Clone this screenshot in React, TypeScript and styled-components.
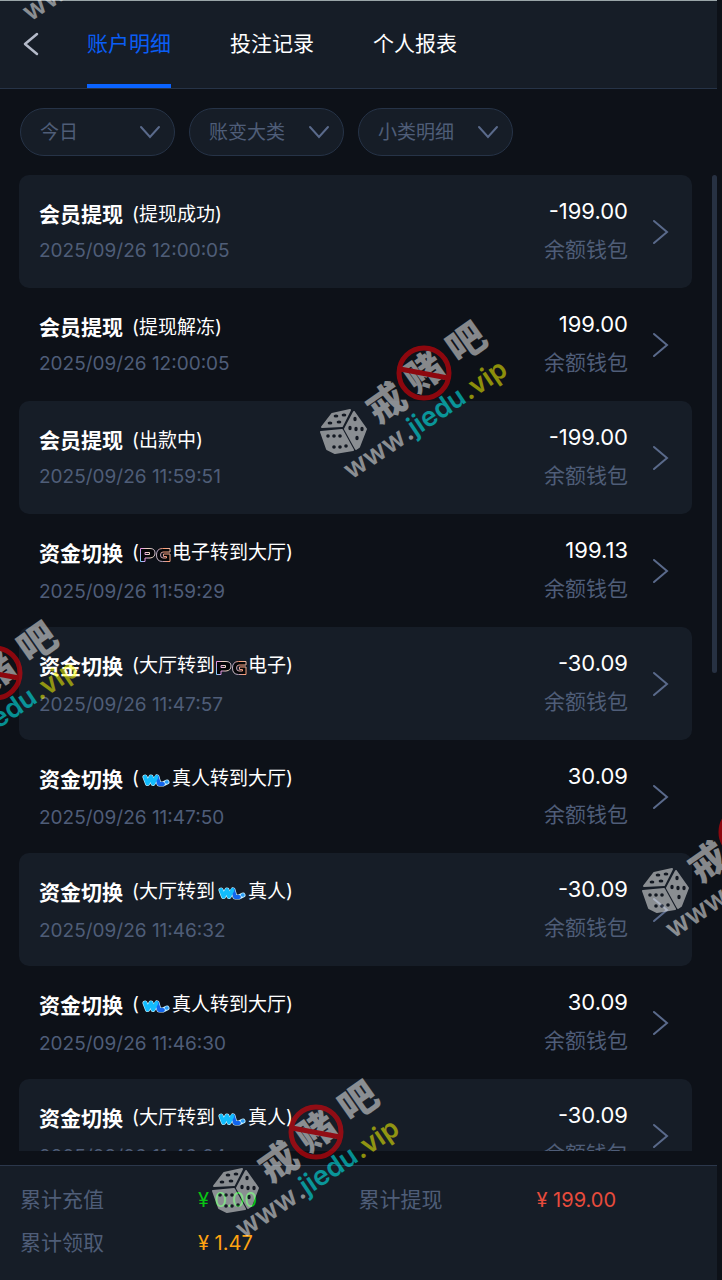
import React from 'react';
import styled, { createGlobalStyle } from 'styled-components';

const color = {
  page: '#0d1118',
  panel: '#161d27',
  line: '#263347',
  muted: '#4f5d78',
  arrow: '#5a6a8b',
  blue: '#0a5df5',
};

const GlobalStyle = createGlobalStyle`
  * { box-sizing: border-box; }
  body {
    margin: 0;
    background: ${color.page};
    color: #fff;
    font-family: Inter, 'Noto Sans CJK SC', sans-serif;
  }
  button, select { font: inherit; color: inherit; }
`;

const Page = styled.div`
  position: relative;
  display: flex;
  flex-direction: column;
  height: 100vh;
  overflow: hidden;
`;

const Header = styled.header`
  display: flex;
  align-items: stretch;
  height: 89px;
  margin-right: 5px;
  padding-left: 20px;
  background: ${color.panel};
  border-top: 1px solid #9aa5a8;
  border-bottom: 1px solid ${color.line};
`;

const BackButton = styled.button`
  display: flex;
  align-items: center;
  width: 67px;
  padding: 0 0 2px;
  border: 0;
  background: none;
`;

const Tabs = styled.nav`
  display: flex;
  gap: 59px;
`;

const Tab = styled.a<{ $active?: boolean }>`
  display: flex;
  align-items: center;
  padding-bottom: 2px;
  font-size: 21px;
  line-height: 24px;
  text-decoration: none;
  color: ${(p) => (p.$active ? color.blue : '#fff')};
  border-top: 4px solid transparent;
  border-bottom: 4px solid ${(p) => (p.$active ? '#0a63ff' : 'transparent')};
`;

const Filters = styled.form`
  display: flex;
  gap: 14px;
  padding: 19px 20px;
`;

const Filter = styled.label`
  display: grid;
  grid-template-columns: 1fr 35px;
  align-items: center;
  width: 155px;
  height: 48px;
  border: 1px solid ${color.line};
  border-radius: 24px;
  background: ${color.panel};
`;

const FilterSelect = styled.select`
  grid-area: 1 / 1 / 2 / 3;
  width: 100%;
  height: 46px;
  padding: 0 35px 0 19px;
  appearance: none;
  border: 0;
  border-radius: 23px;
  background: transparent;
  color: ${color.muted};
  font-size: 19px;
`;

const FilterArrow = styled.svg`
  grid-area: 1 / 2 / 2 / 3;
  pointer-events: none;
`;

const Main = styled.main`
  display: flex;
  flex: 1;
  min-height: 0;
  margin-bottom: 14px;
  padding: 0 5px 0 19px;
`;

const List = styled.ul`
  flex: 1;
  margin: 0 20px 0 0;
  padding: 0;
  list-style: none;
  overflow-y: auto;
  scrollbar-width: none;
`;

const ScrollTrack = styled.div`
  width: 5px;
`;

const ScrollThumb = styled.div`
  height: 51%;
  border-radius: 3px;
  background: #273142;
`;

const Item = styled.li`
  border-radius: 10px;
  &:nth-child(odd) { background: ${color.panel}; }
`;

const ItemLink = styled.a`
  display: flex;
  height: 113px;
  padding: 24px 22px 0 20px;
  color: inherit;
  text-decoration: none;
`;

const Info = styled.div`
  flex: 1;
  padding-top: 4px;
`;

const TitleLine = styled.div<{ $logo: boolean }>`
  display: flex;
  align-items: flex-start;
  gap: 9px;
  height: 24px;
  margin-bottom: ${(p) => (p.$logo ? 14 : 12)}px;
`;

const Title = styled.strong`
  font-size: 21px;
  line-height: 24px;
  font-weight: 700;
`;

const Detail = styled.span<{ $logo: boolean }>`
  display: flex;
  align-items: center;
  font-size: 19px;
  line-height: ${(p) => (p.$logo ? 21 : 24)}px;
`;

const Time = styled.time`
  display: block;
  font-size: 19px;
  line-height: 24px;
  color: ${color.muted};
`;

const Money = styled.div`
  display: flex;
  flex-direction: column;
  align-items: flex-end;
  gap: 15px;
`;

const Amount = styled.span`
  font-size: 22px;
  line-height: 24px;
`;

const Wallet = styled.span`
  font-size: 21px;
  line-height: 24px;
  color: ${color.muted};
`;

const ItemArrow = styled.svg`
  margin: 19px 0 0 22px;
`;

const Summary = styled.dl`
  display: grid;
  grid-template-columns: 1fr 1fr;
  align-content: start;
  row-gap: 19px;
  height: 115px;
  margin: 0 5px 0 0;
  padding: 22px 20px 0;
  background: ${color.panel};
  border-top: 1px solid #2b374b;
  font-size: 21px;
  line-height: 24px;
`;

const SummaryItem = styled.div`
  display: flex;
`;

const SummaryLabel = styled.dt`
  width: 178px;
  color: ${color.muted};
`;

const SummaryValue = styled.dd<{ $tone: string }>`
  margin: 0;
  font-size: 20px;
  color: ${(p) => p.$tone};
`;

const WatermarkLayer = styled.div`
  position: absolute;
  inset: 0;
  overflow: hidden;
  pointer-events: none;
`;

const Mark = styled.svg<{ $x: number; $y: number }>`
  position: absolute;
  left: ${(p) => p.$x}px;
  top: ${(p) => p.$y}px;
  opacity: 0.53;
`;

const PgLogo = () => (
  <svg width="33" height="20" viewBox="0 0 33 20" role="img" aria-label="PG">
    <defs>
      <linearGradient id="pg" gradientUnits="userSpaceOnUse" x1="1" y1="18" x2="32" y2="6">
        <stop offset="0" stopColor="#6fd8ff" />
        <stop offset="0.15" stopColor="#e58fe6" />
        <stop offset="0.35" stopColor="#f0d9bd" />
        <stop offset="0.6" stopColor="#b0a2c4" />
        <stop offset="0.8" stopColor="#ff9a70" />
        <stop offset="1" stopColor="#e8c0b0" />
      </linearGradient>
    </defs>
    <g fill="#050608" fillRule="evenodd" stroke="url(#pg)" strokeWidth="1" strokeLinejoin="round">
      <path d="M1.500 18.500V5.500H11Q16 5.500 16 10T11 15H6V18.500ZM6 9.500H10.500V11.500H6Z" />
      <path d="M31 5.500H23.500Q17.500 5.500 17.500 12T23.500 18.500H31V11H24.500V13.500H27.500V15H24Q21.500 15 21.500 12T24 9H31Z" />
    </g>
  </svg>
);

const WlLogo = () => (
  <svg width="33" height="20" viewBox="0 0 33 20" role="img" aria-label="WL">
    <g fill="none" strokeLinecap="round" strokeLinejoin="round">
      <path d="M6 8L8.500 14.500L12 8L14 14.500L18 8L20 15H24L28 13" stroke="#c9f0ff" strokeWidth="5" />
      <path d="M18 8L20 15H24" stroke="#1266ee" strokeWidth="3.800" />
      <path d="M6 8L8.500 14.500L12 8L14 14.500L17.500 8" stroke="#12bcfd" strokeWidth="3.800" />
      <path d="M27.500 13L28 13" stroke="#2a9df5" strokeWidth="3.400" />
    </g>
  </svg>
);

type Part = string | { logo: 'pg' | 'wl' };
type Entry = { title: string; detail: Part[]; time: string; amount: string };

const pg: Part = { logo: 'pg' };
const wl: Part = { logo: 'wl' };

const entries: Entry[] = [
  { title: '会员提现', detail: ['(提现成功)'], time: '2025/09/26 12:00:05', amount: '-199.00' },
  { title: '会员提现', detail: ['(提现解冻)'], time: '2025/09/26 12:00:05', amount: '199.00' },
  { title: '会员提现', detail: ['(出款中)'], time: '2025/09/26 11:59:51', amount: '-199.00' },
  { title: '资金切换', detail: ['(', pg, '电子转到大厅)'], time: '2025/09/26 11:59:29', amount: '199.13' },
  { title: '资金切换', detail: ['(大厅转到', pg, '电子)'], time: '2025/09/26 11:47:57', amount: '-30.09' },
  { title: '资金切换', detail: ['(', wl, '真人转到大厅)'], time: '2025/09/26 11:47:50', amount: '30.09' },
  { title: '资金切换', detail: ['(大厅转到', wl, '真人)'], time: '2025/09/26 11:46:32', amount: '-30.09' },
  { title: '资金切换', detail: ['(', wl, '真人转到大厅)'], time: '2025/09/26 11:46:30', amount: '30.09' },
  { title: '资金切换', detail: ['(大厅转到', wl, '真人)'], time: '2025/09/26 11:46:24', amount: '-30.09' },
];

const EntryRow = ({ entry }: { entry: Entry }) => {
  const hasLogo = entry.detail.length > 1;
  return (
    <Item>
      <ItemLink href="#detail">
        <Info>
          <TitleLine $logo={hasLogo}>
            <Title>{entry.title}</Title>
            <Detail $logo={hasLogo}>
              {entry.detail.map((part, i) =>
                typeof part === 'string' ? (
                  <span key={i}>{part}</span>
                ) : part.logo === 'pg' ? (
                  <PgLogo key={i} />
                ) : (
                  <WlLogo key={i} />
                ),
              )}
            </Detail>
          </TitleLine>
          <Time>{entry.time}</Time>
        </Info>
        <Money>
          <Amount>{entry.amount}</Amount>
          <Wallet>余额钱包</Wallet>
        </Money>
        <ItemArrow width="20" height="28" viewBox="0 0 20 28" fill="none" stroke={color.arrow} strokeWidth="2" strokeLinecap="round">
          <path d="M4 3L17 14L4 25" />
        </ItemArrow>
      </ItemLink>
    </Item>
  );
};

const Watermark = ({ x, y }: { x: number; y: number }) => (
  <Mark $x={x} $y={y} width="210" height="175" viewBox="0 0 210 175">
    <g fill="#f2f2f2" stroke="#f2f2f2" strokeWidth="2" strokeLinejoin="round">
      <path d="M12 116L22 103L40 99L32 115Z" />
      <path d="M44 101L56 118L49 136L46 138L35 118Z" />
      <path d="M11 121L32 119L43 139L25 142L17 138Z" />
    </g>
    <g fill="#12161e">
      <ellipse cx="26" cy="105" rx="2.400" ry="1.600" />
      <ellipse cx="34" cy="104" rx="2.400" ry="1.600" />
      <ellipse cx="20" cy="112" rx="2.400" ry="1.600" />
      <ellipse cx="29" cy="111" rx="2.400" ry="1.600" />
      <ellipse cx="45" cy="108" rx="1.700" ry="2.200" />
      <ellipse cx="40" cy="117" rx="1.700" ry="2.200" />
      <ellipse cx="46" cy="118" rx="1.700" ry="2.200" />
      <ellipse cx="52" cy="118" rx="1.700" ry="2.200" />
      <ellipse cx="47" cy="127" rx="1.700" ry="2.200" />
      <circle cx="18" cy="125" r="1.800" />
      <circle cx="24" cy="125" r="1.800" />
      <circle cx="30" cy="125" r="1.800" />
      <circle cx="24" cy="136" r="1.800" />
      <circle cx="30" cy="136" r="1.800" />
      <circle cx="36" cy="135" r="1.800" />
    </g>
    <g fill="#f2f2f2" fontFamily="'Noto Sans CJK SC', sans-serif" fontWeight="900" fontSize="38" textAnchor="middle">
      <text transform="translate(76 92) rotate(-35)" y="14">戒</text>
      <text transform="translate(114 61) rotate(-35)" y="14">赌</text>
      <text transform="translate(156 31) rotate(-35)" y="14">吧</text>
    </g>
    <g stroke="#ff0006" strokeWidth="5" fill="none">
      <circle cx="114" cy="62" r="25" />
      <path d="M90 58L138 67" />
    </g>
    <g transform="translate(43 168) rotate(-34)" fontFamily="Inter, sans-serif" fontSize="27" fontWeight="600">
      <text x="-2" fill="#f2f2f2">www</text>
      <text x="67" fill="#f2f2f2">.</text>
      <text x="75" fill="#00ffff">jiedu</text>
      <text x="140" fill="#ffff00">.vip</text>
    </g>
  </Mark>
);

const marks = [
  { x: 310, y: 311 },
  { x: 202, y: 1070 },
  { x: 632, y: 770 },
  { x: -119, y: 611 },
  { x: -11, y: -147 },
];

const filters = [
  { name: 'date', label: '日期', value: '今日' },
  { name: 'category', label: '大类', value: '账变大类' },
  { name: 'subcategory', label: '小类', value: '小类明细' },
];

const totals = [
  { label: '累计充值', value: '¥ 0.00', tone: '#08c414' },
  { label: '累计提现', value: '¥ 199.00', tone: '#e74b3c' },
  { label: '累计领取', value: '¥ 1.47', tone: '#ffa312' },
];

export default function App() {
  return (
    <Page>
      <GlobalStyle />
      <Header>
        <BackButton type="button" aria-label="返回">
          <svg width="20" height="26" viewBox="0 0 20 26" fill="none" stroke="#b4bac9" strokeWidth="2.500" strokeLinecap="round" strokeLinejoin="round">
            <path d="M17 3L5 13L17 23" />
          </svg>
        </BackButton>
        <Tabs>
          <Tab href="#account" $active>账户明细</Tab>
          <Tab href="#bets">投注记录</Tab>
          <Tab href="#report">个人报表</Tab>
        </Tabs>
      </Header>
      <Filters>
        {filters.map((f) => (
          <Filter key={f.name}>
            <FilterSelect name={f.name} aria-label={f.label}>
              <option>{f.value}</option>
            </FilterSelect>
            <FilterArrow width="22" height="16" viewBox="0 0 22 16" fill="none" stroke={color.arrow} strokeWidth="2" strokeLinecap="round">
              <path d="M2 3L11 13L20 3" />
            </FilterArrow>
          </Filter>
        ))}
      </Filters>
      <Main>
        <List>
          {entries.map((entry, i) => (
            <EntryRow key={i} entry={entry} />
          ))}
        </List>
        <ScrollTrack>
          <ScrollThumb />
        </ScrollTrack>
      </Main>
      <Summary>
        {totals.map((t) => (
          <SummaryItem key={t.label}>
            <SummaryLabel>{t.label}</SummaryLabel>
            <SummaryValue $tone={t.tone}>{t.value}</SummaryValue>
          </SummaryItem>
        ))}
      </Summary>
      <WatermarkLayer aria-hidden="true">
        {marks.map((m) => (
          <Watermark key={`${m.x},${m.y}`} x={m.x} y={m.y} />
        ))}
      </WatermarkLayer>
    </Page>
  );
}
